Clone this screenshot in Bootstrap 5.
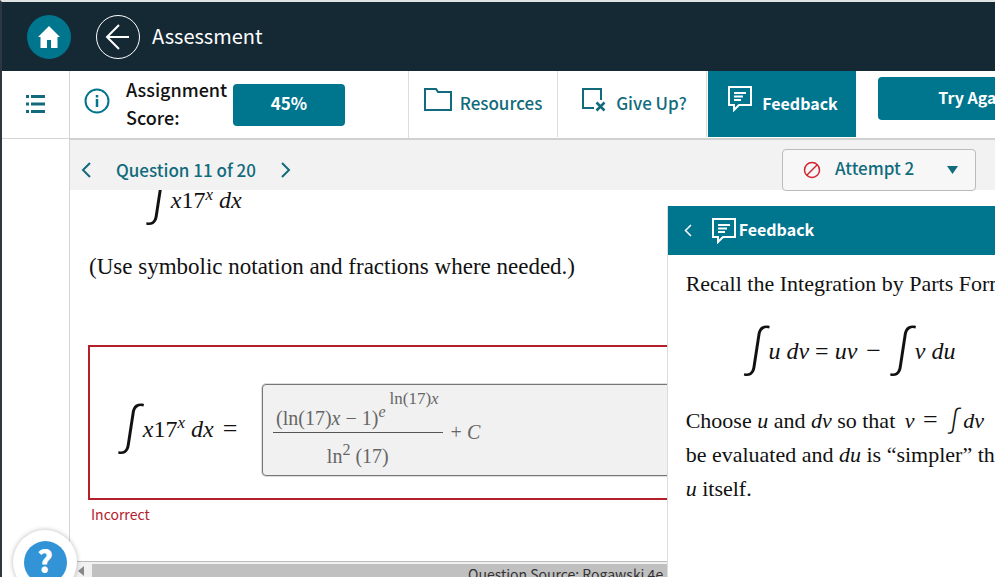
<!DOCTYPE html>
<html lang="en">
<head>
<meta charset="utf-8">
<meta name="viewport" content="width=device-width, initial-scale=1">
<title>Assessment</title>
<link href="https://cdn.jsdelivr.net/npm/bootstrap@5.3.0/dist/css/bootstrap.min.css" rel="stylesheet">
<style>
:root{--teal:#00758e;--ink:#152935;--link:#116b7c;--err:#b3202c}
body{font-family:"Noto Sans CJK SC","Open Sans",sans-serif;font-size:18px;line-height:28px;color:#111;background:#fff}
button{font-family:inherit}
svg{display:block;flex:none}
.shell{border-left:2px solid #2c3742;border-top:2px solid #dfe3e4}
.topbar{background:var(--ink);height:69px;padding-left:25px}
.topbar h1{font-size:20px;line-height:32px;font-weight:400;margin:0 0 0 12px;padding-bottom:2px;color:#fff}
.round-btn{width:44px;height:44px;padding:0;border:0;border-radius:50%;background:var(--teal);display:grid;place-items:center}
.round-btn.ring{background:none;border:1px solid #fff;margin-left:25px}
.rail{width:68px;border-right:1px solid #d5d5d5}
.rail-head{height:68px;border-bottom:1px solid #d5d5d5;padding-bottom:2px}
.flat{border:0;background:none;padding:0}
.tools{height:69px;border-bottom:2px solid #d0d0d0}
.score-area{width:339px;border-right:1px solid #ddd;padding-left:14px;color:#111}
.score-label{width:107px;margin-left:16px;padding-bottom:4px;font-weight:500}
.score-btn{width:112px;height:42px;background:var(--teal);color:#fff;font-weight:700;border-radius:4px;border:0;padding:0 0 4px;font-size:17px}
.tool-btn{width:149px;border:0;border-right:1px solid #ddd;border-radius:0;background:none;color:var(--link);font-weight:500;font-size:17px;gap:8px;padding:0 0 2px;height:66px}
.tool-btn.give{gap:10px;padding-left:4px}
.tool-btn.on{width:148px;margin-left:1px;background:var(--teal);color:#fff;border:0;font-weight:700;font-size:16px;gap:10px;padding-left:2px}
.try-btn{width:194px;height:43px;background:var(--teal);color:#fff;font-weight:700;border:0;border-radius:4px;margin:6px 0 0 22px;padding:0 0 4px;flex:none;font-size:16px}
.qbar{height:50px;background:#f2f2f2;padding:9px 19px 0 11px;color:var(--link);font-weight:500;font-size:17px}
.q-title{margin:0 25px}
.attempt{width:194px;height:42px;border:1px solid #bbb;border-radius:4px;background:#f7f7f7;color:var(--link);font-weight:500;font-size:17px;padding:0 17px 0 20px;position:relative;z-index:2}
.attempt span{padding:0 0 4px 14px}
.math,.prose{font-family:"Liberation Serif",serif;color:#111}
.prose{font-size:22px;line-height:34px}
.math{font-size:24px;line-height:28px;white-space:pre}
.math sup{font-size:17px;line-height:0}
.answer sup{font-size:16px;line-height:0}
.rel{margin:0 2px 0 3px;font-size:26px;line-height:1px}
.intg,.intg-sm{font-family:Roboto,sans-serif;font-weight:300;font-style:italic}
.intg{font-size:52px;line-height:54px;padding-bottom:6px;margin-right:5px}
.intg-sm{font-size:27px;line-height:1px;margin-left:6px}
.question{padding:0 0 0 18px}
.first-line{margin-top:-20px;padding-left:65px;height:60px}
.left-prose{font-size:23px;margin-top:20px;padding-left:1px}
.wrong-box{width:700px;border:2px solid var(--err);height:155px;margin-top:61px;padding:14px 0 0 35px}
.wrong-box .eq{width:137px;padding-bottom:2px}
.answer{font-family:"Liberation Serif",serif;font-size:20px;line-height:24px;color:#666;background:#f1f1f1;border:1px solid #777;border-radius:4px;box-shadow:0 0 0 1px #ddd;height:92px;width:480px;padding:0 10px}
.num{border-bottom:1px solid #555;padding:0 4px 2px 3px;height:44px}
.top-exp{font-size:17px;line-height:20px;margin-left:4px}
.den{padding-top:11px;height:38px}
.err-text{font-size:14px;line-height:20px;color:var(--err);margin:4px 0 0 3px}
.hscroll{height:16px;border-top:1px solid #bbb;background:#f1f1f1}
.thumb{background:#c0c0c0;height:13px;margin-top:2px;padding-left:376px;font-size:14px;line-height:20px;color:#333}
.panel{width:33vw;min-width:328px;margin-top:16px;border-left:1px solid #ddd;background:#fff}
.panel-head{height:49px;background:var(--teal);color:#fff;font-weight:700;font-size:16px;padding-left:17px;margin-left:-1px}
.panel-head svg{margin-right:3px}
.panel-head .flat{margin-right:17px}
.panel-head span{padding-bottom:4px}
.panel-body{padding:12px 0 0 18px}
.formula{height:103px;padding:0 0 4px 65px}
.formula .second{margin-left:14px}
.help{position:absolute;left:11px;bottom:-17px;width:64px;height:64px;border-radius:50%;background:#fff;box-shadow:0 0 5px rgba(0,0,0,.28);z-index:5;display:grid;place-items:center;border:0;padding:0}
.help-dot{width:43px;height:43px;border-radius:50%;background:#3294d6;color:#fff;font-weight:900;font-size:30px;line-height:39px}
</style>
<script src="https://cdn.jsdelivr.net/npm/bootstrap@5.3.0/dist/js/bootstrap.bundle.min.js"></script>
</head>
<body>
<div class="shell vh-100 d-flex flex-column overflow-hidden position-relative">
  <header class="topbar d-flex align-items-center flex-shrink-0">
    <button class="round-btn" aria-label="Home"><svg width="24" height="24" viewBox="0 0 24 24" fill="#fff"><path d="M12 1 1 12h2.500v11H10v-8h4v8h6.500V12H23z"/></svg></button>
    <button class="round-btn ring" aria-label="Back"><svg width="26" height="26" viewBox="0 0 26 26" fill="none" stroke="#fff" stroke-width="2"><path d="M24 13H2M14 1 2 13l12 12"/></svg></button>
    <h1>Assessment</h1>
  </header>
  <div class="d-flex flex-grow-1 overflow-hidden">
    <nav class="rail flex-shrink-0">
      <div class="rail-head d-flex align-items-center justify-content-center">
        <button class="flat" aria-label="Contents"><svg width="19" height="18" viewBox="0 0 19 18" fill="#116b7c"><path d="M0 0h3v3H0zM5 0h14v3H5zM0 7.500h3v3H0zM5 7.500h14v3H5zM0 15h3v3H0zM5 15h14v3H5z"/></svg></button>
      </div>
    </nav>
    <main class="d-flex flex-column flex-grow-1 overflow-hidden">
      <div class="tools d-flex flex-shrink-0 overflow-hidden">
        <div class="score-area d-flex align-items-center flex-shrink-0">
          <button class="flat mb-2" aria-label="Score information"><svg width="26" height="26" viewBox="0 0 26 26" fill="none" stroke="#00758e" stroke-width="2"><circle cx="13" cy="13" r="11.500"/><path d="M13 11v8M13 7v2.500" stroke-width="2.500"/></svg></button>
          <div class="score-label">Assignment Score:</div>
          <button class="score-btn">45%</button>
        </div>
        <button class="tool-btn d-flex align-items-center justify-content-center flex-shrink-0"><svg class="mb-2" width="28" height="23" viewBox="0 0 28 23" fill="none" stroke="#116b7c" stroke-width="2"><path d="M1 22V1h11l2 3h13v18z"/></svg>Resources</button>
        <button class="tool-btn give d-flex align-items-center justify-content-center flex-shrink-0"><svg class="mb-2" width="25" height="25" viewBox="0 0 25 25" fill="none" stroke="#116b7c" stroke-width="2"><path d="M13 21H2V2h18v11"/><path d="m15.500 15.500 8 8m0-8-8 8" stroke-width="2.500"/></svg>Give Up?</button>
        <button class="tool-btn on d-flex align-items-center justify-content-center flex-shrink-0"><svg class="mb-2" width="24" height="26" viewBox="0 0 24 26" fill="none" stroke="#fff" stroke-width="2"><path d="M1 1h22v18H11l-5 5v-5H1z"/><path d="M6 7h12M6 10.500h9M6 14h7"/></svg>Feedback</button>
        <button class="try-btn">Try Again</button>
      </div>
      <div class="qbar d-flex align-items-center flex-shrink-0">
        <button class="flat" aria-label="Previous question"><svg width="10" height="16" viewBox="0 0 10 16" fill="none" stroke="#116b7c" stroke-width="2"><path d="M9 1 2 8l7 7"/></svg></button>
        <span class="q-title">Question 11 of 20</span>
        <button class="flat" aria-label="Next question"><svg width="10" height="16" viewBox="0 0 10 16" fill="none" stroke="#116b7c" stroke-width="2"><path d="m1 1 7 7-7 7"/></svg></button>
        <button class="attempt d-flex align-items-center ms-auto"><svg width="18" height="18" viewBox="0 0 18 18" fill="none" stroke="#d0222f" stroke-width="1.500"><circle cx="9" cy="9" r="7.500"/><path d="M14 4 4 14"/></svg><span>Attempt 2</span><svg class="ms-auto" width="11" height="8" viewBox="0 0 11 8" fill="#116b7c"><path d="M0 0h11L5.500 8z"/></svg></button>
      </div>
      <div class="d-flex flex-grow-1 overflow-hidden">
        <section class="d-flex flex-column flex-grow-1 overflow-hidden">
          <div class="question flex-grow-1 overflow-hidden">
            <div class="math first-line d-flex align-items-center"><span class="intg">∫</span><span><i>x</i>17<sup><i>x</i></sup> <i>dx</i></span></div>
            <div class="prose left-prose text-nowrap">(Use symbolic notation and fractions where needed.)</div>
            <div class="wrong-box d-flex align-items-center">
              <div class="math eq d-flex align-items-center flex-shrink-0"><span class="intg">∫</span><span><i>x</i>17<sup><i>x</i></sup> <i>dx</i> <span class="rel">=</span></span></div>
              <div class="answer d-flex align-items-center flex-shrink-0">
                <div class="d-flex flex-column">
                  <div class="num d-flex align-items-end"><span>(ln(17)<i>x</i> − 1)<sup><i>e</i></sup></span><span class="top-exp align-self-start">ln(17)<i>x</i></span></div>
                  <div class="den text-center">ln<sup>2</sup> (17)</div>
                </div>
                <span class="ms-2 pt-1">+ <i>C</i></span>
              </div>
            </div>
            <p class="err-text">Incorrect</p>
          </div>
          <div class="hscroll d-flex flex-shrink-0 overflow-hidden">
            <svg class="mx-2 mt-1" width="6" height="10" viewBox="0 0 6 10" fill="#888"><path d="M6 0v10L0 5z"/></svg>
            <div class="thumb flex-grow-1 text-nowrap">Question Source: Rogawski 4e</div>
          </div>
        </section>
        <aside class="panel flex-shrink-0 overflow-hidden text-nowrap">
          <div class="panel-head d-flex align-items-center"><button class="flat" aria-label="Close feedback"><svg width="8" height="13" viewBox="0 0 8 13" fill="none" stroke="#fff" stroke-width="1.500"><path d="m7 1-5.500 5.500L7 12"/></svg></button>
            <svg width="24" height="26" viewBox="0 0 24 26" fill="none" stroke="#fff" stroke-width="2"><path d="M1 1h22v18H11l-5 5v-5H1z"/><path d="M6 7h12M6 10.500h9M6 14h7"/></svg><span>Feedback</span></div>
          <div class="panel-body prose">
            <div>Recall the Integration by Parts Formula.</div>
            <div class="math formula d-flex align-items-center"><span class="intg">∫</span><span><i>u dv</i> = <i>uv</i> <span class="rel">−</span></span><span class="intg second">∫</span><span><i>v du</i></span></div>
            <div>Choose <i>u</i> and <i>dv</i> so that <i class="ms-1">v</i> <span class="rel">=</span> <span class="intg-sm">∫</span> <i>dv</i></div>
            <div>be evaluated and <i>du</i> is “simpler” than</div>
            <div><i>u</i> itself.</div>
          </div>
        </aside>
      </div>
    </main>
  </div>
  <button class="help" aria-label="Help"><span class="help-dot">?</span></button>
</div>
</body>
</html>
